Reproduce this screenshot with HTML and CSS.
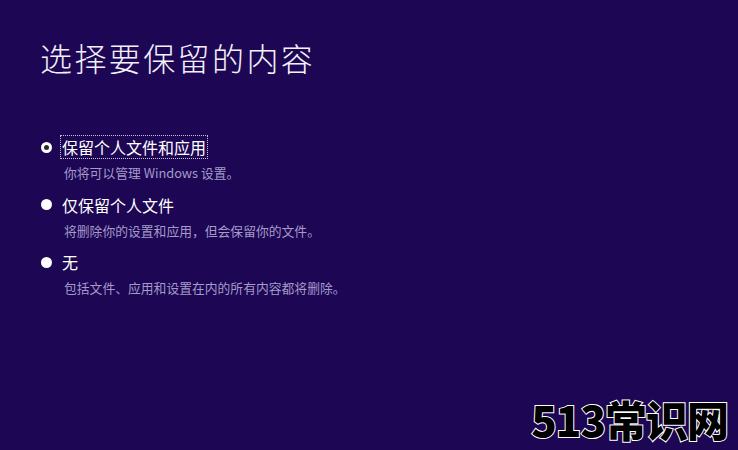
FILE: index.html
```html
<!DOCTYPE html>
<html lang="zh-CN">
<head>
<meta charset="utf-8">
<title>选择要保留的内容</title>
<link rel="stylesheet" href="styles.css">
</head>
<body>
<main class="page">
  <h1 class="title">选择要保留的内容</h1>
  <ul class="options">
    <li class="option">
      <div class="option-row">
        <span class="radio radio-checked"></span>
        <span class="label label-focus">保留个人文件和应用</span>
      </div>
      <p class="desc">你将可以管理 Windows 设置。</p>
    </li>
    <li class="option">
      <div class="option-row">
        <span class="radio"></span>
        <span class="label">仅保留个人文件</span>
      </div>
      <p class="desc">将删除你的设置和应用，但会保留你的文件。</p>
    </li>
    <li class="option">
      <div class="option-row">
        <span class="radio"></span>
        <span class="label">无</span>
      </div>
      <p class="desc">包括文件、应用和设置在内的所有内容都将删除。</p>
    </li>
  </ul>
  <div class="watermark">513常识网</div>
</main>
</body>
</html>
```
FILE: styles.css
```css
html, body {
  margin: 0;
  padding: 0;
}
body {
  background: #1d0654;
  font-family: "Noto Sans CJK SC", "Noto Sans", sans-serif;
  color: #ffffff;
  width: 738px;
  height: 450px;
  overflow: hidden;
}
.page {
  position: relative;
  width: 738px;
  height: 450px;
  padding: 38px 0 0 40px;
  box-sizing: border-box;
}
.title {
  margin: 0;
  font-size: 32px;
  font-weight: 300;
  line-height: 38px;
  letter-spacing: 2.4px;
  color: #f2f0f8;
}
.options {
  list-style: none;
  margin: 0;
  padding: 0;
  margin-top: 59px;
}
.option {
  margin-bottom: 10.5px;
}
.option-row {
  display: flex;
  align-items: center;
  gap: 8px;
  height: 24px;
}
.radio {
  width: 11px;
  height: 11px;
  border-radius: 50%;
  background: #ffffff;
  box-sizing: border-box;
  flex: none;
  margin-left: 1px;
}
.radio-checked {
  background: #2a2a2a;
  border: 3px solid #ffffff;
}
.label {
  font-size: 16px;
  line-height: 22px;
  padding: 0 1px;
  color: #ffffff;
  border: 1px dotted transparent;
}
.label-focus {
  border-color: #c8c2dc;
}
.desc {
  margin: 0;
  padding-left: 24px;
  margin-top: 5px;
  font-size: 12.8px;
  line-height: 18px;
  color: #a49bc9;
}
.watermark {
  position: absolute;
  right: 10px;
  bottom: 7px;
  font-family: "Noto Sans CJK SC", sans-serif;
  font-size: 42px;
  font-weight: 900;
  line-height: 48px;
  color: #000000;
  -webkit-text-stroke: 2px #ffffff;
  paint-order: stroke fill;
  letter-spacing: -1px;
}
```
